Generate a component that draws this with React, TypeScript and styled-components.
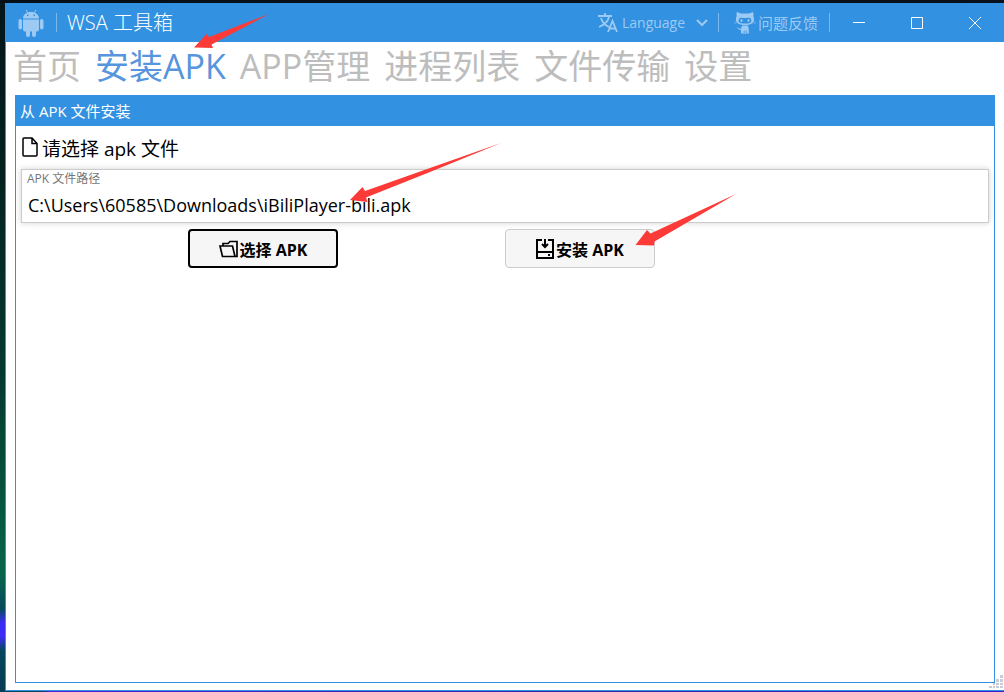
import React from "react";
import styled, { createGlobalStyle } from "styled-components";

const blue = "#3391e1";
const pale = "#9ccaf2";
const ui = '"Open Sans", "Noto Sans CJK SC", sans-serif';

const GlobalStyle = createGlobalStyle`
  * { box-sizing: border-box; }
  body { margin: 0; font-family: ${ui}; color: #000; }
  button, input, select { font-family: inherit; }
`;

const Desktop = styled.div`
  min-height: 100vh;
  display: flex;
  padding: 3px 0 1px 5px;
  background:
    linear-gradient(90deg, #041018, #07121c) top / 100% 3px no-repeat,
    linear-gradient(90deg, #05455c 0 4%, #4a22d8 5%, #2b2aa8 60%, #3a20d0) bottom / 100% 1px no-repeat,
    linear-gradient(180deg, #04151a 0, #04221f 25%, #053a30 55%, #07664a 83%, #064a5c 88%, #3b2cf5 90% 92%, #06465c 94%, #063a52);
`;

const AppWindow = styled.div`
  position: relative;
  flex: 1;
  min-width: 0;
  display: flex;
  flex-direction: column;
  background: #fff;
  border: solid ${blue};
  border-width: 0 0 1px 1px;
`;

const TitleBar = styled.header`
  height: 39px;
  display: flex;
  align-items: center;
  background: ${blue};
  color: #fff;
`;

const Logo = styled.svg`
  flex: none;
  margin-left: 12px;
`;

const Separator = styled.span<{ $gap?: number }>`
  width: 1px;
  height: 19px;
  margin-left: ${(p) => p.$gap ?? 0}px;
  background: #7cb9ec;
`;

const AppTitle = styled.h1`
  flex: 1;
  margin: 0 0 0 10px;
  font-size: 20px;
  line-height: 24px;
  font-weight: 300;
  white-space: nowrap;
`;

const LanguagePicker = styled.label`
  display: flex;
  align-items: center;
  gap: 4px;
  color: ${pale};
`;

const LanguageSelect = styled.select`
  appearance: none;
  width: 70px;
  padding: 0;
  border: 0;
  background: transparent;
  color: inherit;
  font-size: 14px;
  line-height: 20px;
`;

const FeedbackLink = styled.a`
  display: flex;
  align-items: center;
  gap: 2px;
  margin-left: 15px;
  color: ${pale};
  font-size: 15px;
  line-height: 20px;
  text-decoration: none;
  white-space: nowrap;
`;

const CaptionButton = styled.button`
  width: 58px;
  height: 39px;
  display: flex;
  align-items: center;
  justify-content: center;
  padding: 0;
  border: 0;
  background: transparent;
  color: #fff;
`;

const Tabs = styled.nav`
  display: flex;
  flex-wrap: wrap;
  gap: 0 14px;
  padding: 0 7px;
  min-height: 53px;
`;

const Tab = styled.a<{ $active?: boolean }>`
  color: ${(p) => (p.$active ? "#5795dc" : "#bdbdbd")};
  font-size: 34px;
  line-height: 48px;
  font-weight: 400;
  text-decoration: none;
  white-space: nowrap;
`;

const Panel = styled.section`
  flex: 1;
  margin: 0 9px 7px;
  border: 1px solid ${blue};
`;

const PanelTitle = styled.h2`
  margin: 0;
  padding: 0 4px;
  background: ${blue};
  color: #fff;
  font-size: 15px;
  line-height: 30px;
  font-weight: 400;
`;

const PanelBody = styled.div`
  padding: 7px 5px;
`;

const Prompt = styled.p`
  display: flex;
  align-items: center;
  gap: 4px;
  margin: 0 0 4px 1px;
  font-size: 19px;
  line-height: 32px;

  svg {
    margin-bottom: 4px;
  }
`;

const PathField = styled.label`
  display: block;
  height: 54px;
  padding: 0 5px;
  border: 1px solid #ccc;
  box-shadow: 0 0 6px rgba(0, 0, 0, 0.18);
`;

const PathLabel = styled.span`
  display: block;
  color: #757575;
  font-size: 12px;
  line-height: 18px;
`;

const PathInput = styled.input`
  display: block;
  width: 100%;
  height: 34px;
  padding: 0 1px;
  border: 0;
  outline: 0;
  background: transparent;
  color: #000;
  font-size: 18px;
`;

const Actions = styled.div`
  display: grid;
  grid-template-columns: 1fr 150px 1fr 150px 2fr;
  padding: 6px 0 0;
`;

const ActionButton = styled.button<{ $primary?: boolean }>`
  grid-column: ${(p) => (p.$primary ? 2 : 4)};
  height: 39px;
  display: flex;
  align-items: center;
  justify-content: center;
  gap: 2px;
  padding: 0;
  border: ${(p) => (p.$primary ? "2px solid #000" : "1px solid #ccc")};
  border-radius: 4px;
  background: #f6f6f6;
  color: #000;
  font-size: 16px;
  font-weight: 700;
  white-space: nowrap;
`;

const Arrow = styled.svg<{ $x: number; $y: number }>`
  position: absolute;
  left: ${(p) => p.$x}px;
  top: ${(p) => p.$y}px;
  fill: #fc3b38;
  pointer-events: none;
`;

const Grip = styled.svg`
  position: absolute;
  right: 0;
  bottom: 0;
`;

const AndroidIcon = () => (
  <Logo width="26" height="28" viewBox="0 0 26 28" fill={pale} aria-hidden="true">
    <path d="M8 1l2 3M18 1l-2 3" stroke={pale} strokeWidth="1" />
    <path fillRule="evenodd" d="M5 9.500C5 5.500 8.500 3 13 3s8 2.500 8 6.500zM9 5.500v1.500h1.500V5.500zM15.500 5.500v1.500H17V5.500z" />
    <path d="M5 10.500h16v10a2 2 0 0 1-2 2h-1v3.500a2 2 0 0 1-4 0v-3.500h-2v3.500a2 2 0 0 1-4 0v-3.500H7a2 2 0 0 1-2-2z" />
    <rect x="0.500" y="10" width="3.500" height="10.500" rx="1.700" />
    <rect x="22" y="10" width="3.500" height="10.500" rx="1.700" />
  </Logo>
);

const TranslateIcon = () => (
  <svg width="20" height="20" viewBox="0 0 20 20" fill="none" stroke={pale} strokeWidth="1.800" aria-hidden="true">
    <path d="M0 3h14M7 0v3M3 5c1 4 4 7 8 9M11 4c-1 4-5 8-10 10" />
    <path d="M10 19l4.500-11L19 19M11.500 15.500h6" />
  </svg>
);

const OctocatIcon = () => (
  <svg width="22" height="22" viewBox="0 0 22 22" fill={pale} aria-hidden="true">
    <path fillRule="evenodd" d="M3 0l4 1.500h8L19 0c.7 1.500.5 3 .3 4 1.200 2 .9 5-.3 6.500C17.500 12.500 14 13 11 13s-6.500-.5-8-2.500C1.800 9 1.500 6 2.700 4 2.500 3 2.300 1.500 3 0zM6 6C4 7 4.200 11 7 11.300c2 .3 6 .3 8 0C17.800 11 18 7 16 6c-2-.7-3 0-5 0s-3-.7-5 0z" />
    <ellipse cx="7.500" cy="8.500" rx="1" ry="1.500" />
    <ellipse cx="14.500" cy="8.500" rx="1" ry="1.500" />
    <path d="M8.500 13.500h5c1 .8 1.200 2.500 1.200 4.500l.3 3.500h-1.700L13 18.500h-.5V22h-1.200v-3.500h-.8V22H9.300v-3.500L8.700 21.500H7V18C5 18.500 4.500 16.500 2.500 15.500c2.300-.6 2.500 1.500 4.700 1.200 0-1.500.4-2.500 1.300-3.200z" />
    <path d="M0 10l3-.5M0 12l3-1.200M22 10l-3-.5M22 12l-3-1.200" stroke={pale} strokeWidth=".4" />
  </svg>
);

const FileIcon = () => (
  <svg width="16" height="20" viewBox="0 0 16 20" fill="none" stroke="#000" strokeWidth="1.500" aria-hidden="true">
    <path d="M1 2a1 1 0 0 1 1-1h8l5 5.500V18a1 1 0 0 1-1 1H2a1 1 0 0 1-1-1zM10 1v5.500h5" />
  </svg>
);

const FolderIcon = () => (
  <svg width="19" height="18" viewBox="0 0 19 18" fill="none" stroke="#000" strokeWidth="1.700" aria-hidden="true">
    <path d="M1 6h12.500l2.500 10.500H3.500zM4 6V3.500h5L11 1.500h7v15h-2" />
  </svg>
);

const InstallIcon = () => (
  <svg width="18" height="20" viewBox="0 0 18 20" fill="none" stroke="#000" strokeWidth="2" aria-hidden="true">
    <path d="M6 1H1v18h16V1h-5M1 13h16M9 0v8" />
    <path d="M6 5L9 8l3-3M12 16h2" />
  </svg>
);

const tabs = ["首页", "安装APK", "APP管理", "进程列表", "文件传输", "设置"];

export default function App() {
  return (
    <>
      <GlobalStyle />
      <Desktop>
        <AppWindow>
          <TitleBar>
            <AndroidIcon />
            <Separator $gap={12} />
            <AppTitle>WSA 工具箱</AppTitle>
            <LanguagePicker>
              <TranslateIcon />
              <LanguageSelect aria-label="Language" defaultValue="">
                <option value="">Language</option>
              </LanguageSelect>
              <svg width="12" height="8" viewBox="0 0 12 8" fill="none" stroke={pale} strokeWidth="2" aria-hidden="true">
                <path d="M1 1l5 5 5-5" />
              </svg>
            </LanguagePicker>
            <Separator $gap={10} />
            <FeedbackLink href="#feedback">
              <OctocatIcon />
              问题反馈
            </FeedbackLink>
            <Separator $gap={11} />
            <CaptionButton aria-label="Minimize">
              <svg width="12" height="12" stroke="#fff" aria-hidden="true"><path d="M0 5.500h12" /></svg>
            </CaptionButton>
            <CaptionButton aria-label="Maximize">
              <svg width="12" height="12" fill="none" stroke="#fff" aria-hidden="true"><path d="M.5.5h11v11H.5z" /></svg>
            </CaptionButton>
            <CaptionButton aria-label="Close">
              <svg width="12" height="12" stroke="#fff" aria-hidden="true"><path d="M0 0l12 12M12 0L0 12" /></svg>
            </CaptionButton>
          </TitleBar>

          <Tabs>
            {tabs.map((name, i) => (
              <Tab key={name} href={`#tab-${i}`} $active={i === 1} aria-current={i === 1 ? "page" : undefined}>
                {name}
              </Tab>
            ))}
          </Tabs>

          <Panel>
            <PanelTitle>从 APK 文件安装</PanelTitle>
            <PanelBody>
              <Prompt>
                <FileIcon />
                请选择 apk 文件
              </Prompt>
              <PathField>
                <PathLabel>APK 文件路径</PathLabel>
                <PathInput defaultValue={"C:\\Users\\60585\\Downloads\\iBiliPlayer-bili.apk"} spellCheck={false} />
              </PathField>
              <Actions>
                <ActionButton type="button" $primary>
                  <FolderIcon />
                  选择 APK
                </ActionButton>
                <ActionButton type="button">
                  <InstallIcon />
                  安装 APK
                </ActionButton>
              </Actions>
            </PanelBody>
          </Panel>

          <Arrow $x={188} $y={11} width="76" height="34" viewBox="0 0 76 34" aria-hidden="true">
            <path d="M75 0L15 23l-2.500-3L0 33.500l19 .5-1.500-3.500z" />
          </Arrow>
          <Arrow $x={344} $y={140} width="152" height="60" viewBox="0 0 152 60" aria-hidden="true">
            <path d="M151 0L80 25 15 48l-2.500-4L0 57l17.500 2-1.500-4.500L80 29z" />
          </Arrow>
          <Arrow $x={629} $y={191} width="102" height="52" viewBox="0 0 102 52" aria-hidden="true">
            <path d="M101 0L15.500 39.500l-3.500-3.500L.5 51l18.500.5.5-4z" />
          </Arrow>
          <Grip width="15" height="16" viewBox="0 0 15 16" fill="#c9cbd6" aria-hidden="true">
            <path d="M11 1h3v3h-3zM7 5h3v3H7zM11 5h3v3h-3zM4 9h2v2H4zM7 9h3v2H7zM11 9h3v2h-3zM0 12h3v2H0zM4 12h2v2H4zM7 12h3v2H7zM11 12h3v2h-3z" />
          </Grip>
        </AppWindow>
      </Desktop>
    </>
  );
}
